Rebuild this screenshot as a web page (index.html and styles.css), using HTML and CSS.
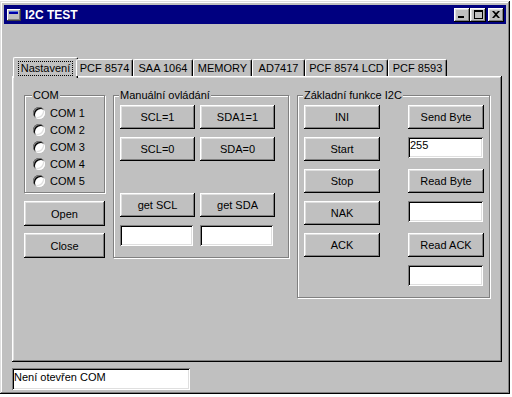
FILE: index.html
```html
<!DOCTYPE html>
<html lang="cs">
<head>
    <meta charset="UTF-8">
    <meta name="viewport" content="width=device-width, initial-scale=1.0">
    <title>I2C TEST</title>
    <link rel="stylesheet" href="styles.css">
</head>
<body>
    <div class="window">
        <!-- Titulek okna -->
        <div class="titlebar">
            <svg class="app-icon" width="14" height="12" viewBox="0 0 14 12">
                <rect x="0" y="0" width="14" height="12" fill="#404040"/>
                <rect x="0" y="0" width="13" height="11" fill="#ffffff"/>
                <rect x="1" y="1" width="12" height="10" fill="#808080"/>
                <rect x="1" y="1" width="11" height="9" fill="#c0c0c0"/>
                <rect x="2" y="2" width="9" height="3" fill="#0000a8"/>
                <rect x="2" y="2" width="9" height="1" fill="#5a78d8"/>
            </svg>
            <span class="title">I2C TEST</span>
            <div class="caption-btns">
                <button class="cap-btn">
                    <svg width="8" height="7" viewBox="0 0 8 7"><rect x="0" y="5" width="6" height="2" fill="#000"/></svg>
                </button>
                <button class="cap-btn">
                    <svg width="9" height="9" viewBox="0 0 9 9"><path d="M0 0h9v9h-9z M1 2v6h7v-6z" fill="#000" fill-rule="evenodd"/></svg>
                </button>
                <button class="cap-btn close">
                    <svg width="8" height="7" viewBox="0 0 8 7"><path d="M0 0h2l2 2 2-2h2l-3 3.5 3 3.5h-2l-2-2-2 2h-2l3-3.5z" fill="#000"/></svg>
                </button>
            </div>
        </div>

        <div class="client">
            <!-- Zalozky -->
            <div class="tabs">
                <div class="tab active tab-nast"><span class="tab-label">Nastavení</span></div>
                <div class="tab tab-pcf"><span class="tab-label">PCF 8574</span></div>
                <div class="tab tab-saa"><span class="tab-label">SAA 1064</span></div>
                <div class="tab tab-mem"><span class="tab-label">MEMORY</span></div>
                <div class="tab tab-ad"><span class="tab-label">AD7417</span></div>
                <div class="tab tab-lcd"><span class="tab-label">PCF 8574 LCD</span></div>
                <div class="tab tab-8593"><span class="tab-label">PCF 8593</span></div>
            </div>

            <div class="panel">
                <div class="col-com">
                    <fieldset class="group group-com">
                        <legend>COM</legend>
                        <label class="radio-row"><span class="radio"></span>COM 1</label>
                        <label class="radio-row"><span class="radio"></span>COM 2</label>
                        <label class="radio-row"><span class="radio"></span>COM 3</label>
                        <label class="radio-row"><span class="radio"></span>COM 4</label>
                        <label class="radio-row"><span class="radio"></span>COM 5</label>
                    </fieldset>
                    <button class="btn btn-com">Open</button>
                    <button class="btn btn-com">Close</button>
                </div>

                <fieldset class="group group-manual">
                    <legend>Manuální ovládání</legend>
                    <div class="grid-manual">
                        <button class="btn">SCL=1</button>
                        <button class="btn">SDA1=1</button>
                        <button class="btn">SCL=0</button>
                        <button class="btn">SDA=0</button>
                        <button class="btn btn-get">get SCL</button>
                        <button class="btn btn-get">get SDA</button>
                        <div class="edit edit-manual"></div>
                        <div class="edit edit-manual"></div>
                    </div>
                </fieldset>

                <fieldset class="group group-basic">
                    <legend>Základní funkce I2C</legend>
                    <div class="grid-basic">
                        <button class="btn">INI</button>
                        <button class="btn">Send Byte</button>
                        <button class="btn">Start</button>
                        <div class="edit edit-basic">255</div>
                        <button class="btn">Stop</button>
                        <button class="btn">Read Byte</button>
                        <button class="btn">NAK</button>
                        <div class="edit edit-basic"></div>
                        <button class="btn">ACK</button>
                        <button class="btn">Read ACK</button>
                        <div class="edit edit-basic edit-last"></div>
                    </div>
                </fieldset>
            </div>

            <div class="edit status">Není otevřen COM</div>
        </div>
    </div>
</body>
</html>
```

FILE: styles.css
```css
/* Zakladni reset */
* {
    margin: 0;
    padding: 0;
    box-sizing: border-box;
}

body {
    background-color: #ffffff;
    font-family: "Liberation Sans", Arial, sans-serif;
    font-size: 11px;
    color: #000;
}

button {
    font: inherit;
    color: inherit;
    border: none;
}

/* Okno */
.window {
    width: 510px;
    height: 393px;
    margin-top: 1px;
    padding: 4px;
    background-color: #c0c0c0;
    display: flex;
    flex-direction: column;
    box-shadow: inset -1px -1px #000, inset 1px 1px #dfdfdf,
                inset -2px -2px #808080, inset 2px 2px #fff;
}

.titlebar {
    height: 19px;
    flex-shrink: 0;
    display: flex;
    align-items: center;
    padding: 0 2px 0 3px;
    background-color: #000080;
    color: #fff;
    font-weight: bold;
    font-size: 12px;
}

.app-icon {
    margin-right: 4px;
    flex-shrink: 0;
}

.caption-btns {
    margin-left: auto;
    display: flex;
}

.cap-btn {
    width: 16px;
    height: 14px;
    display: flex;
    align-items: center;
    justify-content: center;
    background-color: #c0c0c0;
    box-shadow: inset -1px -1px #000, inset 1px 1px #fff,
                inset -2px -2px #808080, inset 2px 2px #dfdfdf;
}

.cap-btn.close {
    margin-left: 2px;
}

/* Klientska oblast */
.client {
    padding: 33px 0 0 8px;
}

/* Zalozky */
.tabs {
    height: 19px;
    display: flex;
    align-items: flex-end;
    padding-left: 3px;
    position: relative;
    z-index: 1;
}

.tab {
    height: 17px;
    line-height: 16px;
    text-align: center;
    white-space: nowrap;
    background-color: #c0c0c0;
    border-top: 1px solid #fff;
    border-left: 1px solid #fff;
    border-right: 1px solid #000;
    border-radius: 2px 2px 0 0;
    box-shadow: inset -1px 0 #808080;
}

.tab-label {
    display: inline-block;
    line-height: 13px;
    padding: 0 2px;
}

.tab.active {
    height: 21px;
    padding-top: 2px;
    margin: 0 -2px -2px;
}

.tab.active .tab-label {
    outline: 1px dotted #000;
    outline-offset: 0;
}

.tab-nast { width: 65px; }
.tab-pcf { width: 57px; }
.tab-saa { width: 60px; }
.tab-mem { width: 59px; }
.tab-ad { width: 53px; }
.tab-lcd { width: 83px; }
.tab-8593 { width: 59px; }

/* Panel zalozky */
.panel {
    width: 490px;
    height: 286px;
    padding: 13px 0 0 12px;
    display: flex;
    align-items: flex-start;
    gap: 8px;
    box-shadow: inset -1px -1px #000, inset 1px 1px #fff,
                inset -2px -2px #808080, inset 2px 2px #dfdfdf;
}

/* Skupiny */
.group {
    min-width: 0;
    border: 1px solid #808080;
    box-shadow: 1px 1px #fff, inset 1px 1px #fff;
    padding: 4px 0 0 6px;
}

.group legend {
    line-height: 12px;
    padding: 0 1px;
    margin-left: -1px;
    background-color: #c0c0c0;
}

.col-com {
    display: flex;
    flex-direction: column;
}

.group-com {
    width: 81px;
    height: 104px;
    padding: 3px 0 0 8px;
}

.radio-row {
    height: 17px;
    display: flex;
    align-items: center;
    gap: 5px;
}

.radio {
    width: 12px;
    height: 12px;
    border-radius: 50%;
    background-color: #fff;
    box-shadow: inset 1px 1px #808080, inset -1px -1px #fff,
                inset 2px 2px #000, inset -2px -2px #dfdfdf;
}

.group-manual {
    width: 176px;
    height: 169px;
}

.group-basic {
    width: 193px;
    height: 209px;
}

/* Tlacitka */
.btn {
    height: 24px;
    background-color: #c0c0c0;
    box-shadow: inset -1px -1px #000, inset 1px 1px #fff,
                inset -2px -2px #808080, inset 2px 2px #dfdfdf;
}

.btn-com {
    width: 81px;
    height: 25px;
    margin-top: 8px;
}

.btn-com + .btn-com {
    margin-top: 7px;
}

.grid-manual {
    display: grid;
    grid-template-columns: 75px 75px;
    column-gap: 5px;
    row-gap: 8px;
}

.btn-get {
    margin-top: 24px;
}

.grid-basic {
    display: grid;
    grid-template-columns: 76px 76px;
    grid-auto-rows: 24px;
    column-gap: 28px;
    row-gap: 8px;
}

.edit-last {
    grid-column: 2;
}

/* Editacni pole */
.edit {
    height: 21px;
    padding: 2px 3px 0;
    line-height: 13px;
    background-color: #fff;
    box-shadow: inset 1px 1px #808080, inset -1px -1px #fff,
                inset 2px 2px #000, inset -2px -2px #dfdfdf;
}

.edit-manual {
    width: 73px;
}

.edit-basic {
    width: 75px;
    padding-left: 2px;
}

.status {
    width: 178px;
    height: 22px;
    margin-top: 6px;
    padding: 3px 2px 0;
}
```
